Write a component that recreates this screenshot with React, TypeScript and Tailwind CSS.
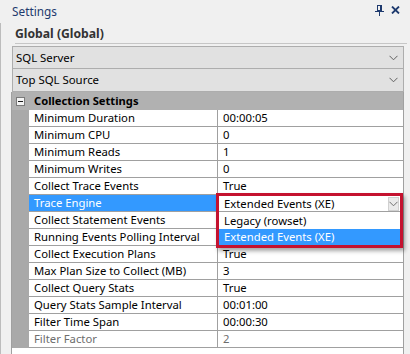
import React from "react";

const rows: { name: string; value: string; disabled?: boolean; selected?: boolean }[] = [
  { name: "Minimum Duration", value: "00:00:05" },
  { name: "Minimum CPU", value: "0" },
  { name: "Minimum Reads", value: "1" },
  { name: "Minimum Writes", value: "0" },
  { name: "Collect Trace Events", value: "True" },
  { name: "Trace Engine", value: "", selected: true },
  { name: "Collect Statement Events", value: "" },
  { name: "Running Events Polling Interval", value: "" },
  { name: "Collect Execution Plans", value: "True" },
  { name: "Max Plan Size to Collect (MB)", value: "3" },
  { name: "Collect Query Stats", value: "True" },
  { name: "Query Stats Sample Interval", value: "00:01:00" },
  { name: "Filter Time Span", value: "00:00:30" },
  { name: "Filter Factor", value: "2", disabled: true },
];

function Chevron({ color = "#606060" }: { color?: string }) {
  return (
    <svg width="9" height="6" viewBox="0 0 9 6">
      <polyline points="0.5,0.8 4.5,4.8 8.5,0.8" fill="none" stroke={color} strokeWidth="1" />
    </svg>
  );
}

function PinIcon() {
  return (
    <svg width="9" height="11" viewBox="0 0 9 11">
      <rect x="2.5" y="0.5" width="4" height="5" fill="none" stroke="#1e3a6e" strokeWidth="1" />
      <rect x="5" y="0" width="2" height="6" fill="#1e3a6e" />
      <rect x="0" y="6" width="9" height="1" fill="#1e3a6e" />
      <rect x="4" y="7" width="1" height="4" fill="#1e3a6e" />
    </svg>
  );
}

function CloseIcon() {
  return (
    <svg width="9" height="8" viewBox="0 0 9 8">
      <path d="M1,0.5 L8,7.5 M8,0.5 L1,7.5" stroke="#1e3a6e" strokeWidth="1.8" fill="none" />
    </svg>
  );
}

export default function App() {
  return (
    <div className="relative w-[410px] h-[354px] overflow-hidden bg-[#f0f0f0] font-['Noto_Sans',sans-serif] text-[11.3px] text-black">
      {/* Title bar */}
      <div className="flex items-center h-[23px] pl-[12px] pr-[10px]">
        <span className="text-[#1e3a6e] text-[11.8px] leading-[16px] -mt-[1px]">Settings</span>
        <div className="ml-auto flex items-center gap-[7px] -mt-[3px]">
          <PinIcon />
          <CloseIcon />
        </div>
      </div>
      {/* Body */}
      <div className="border-l border-[#bcbcbc] h-[331px] flex flex-col">
        <div className="ml-[14px] mr-[3px] h-[21px] border-b border-[#c6c6c6] flex items-end">
          <span className="font-bold text-[12.2px] text-[#333333] leading-[17px] pb-[1px]">Global (Global)</span>
        </div>
        <div className="mt-[2px] ml-[11px] w-[392px] flex flex-col">
          <div className="h-[23px] border border-[#adadad] bg-[#e1e1e1] flex items-center pl-[3px] pr-[5px]">
            <span className="text-[11.4px]">SQL Server</span>
            <span className="ml-auto"><Chevron /></span>
          </div>
          <div className="h-[23px] border border-[#adadad] border-t-0 bg-[#e1e1e1] flex items-center pl-[3px] pr-[5px]">
            <span className="text-[11.4px]">Top SQL Source</span>
            <span className="ml-auto"><Chevron /></span>
          </div>
          {/* Grid */}
          <div className="border-x border-[#a0a0a0] bg-white flex flex-col -ml-px w-[393px] h-[262px]">
            <div className="flex h-[18px] bg-[#b1b1b1]">
              <div className="w-[17px] flex items-center justify-center">
                <div className="w-[9px] h-[9px] border border-[#7a7a7a] bg-[#f4f4f4] flex items-center justify-center">
                  <div className="w-[5px] h-px bg-[#1a1a1a]" />
                </div>
              </div>
              <div className="pl-[5px] font-bold leading-[18px] text-[11.2px]">Collection Settings</div>
            </div>
            {rows.map((r) => (
              <div key={r.name} className="flex h-[17px]">
                <div className="w-[17px] bg-[#a9a9a9]" />
                <div
                  className={
                    "w-[189px] border-r border-b border-[#a0a0a0] pl-[5px] leading-[16px] whitespace-nowrap " +
                    (r.selected ? "bg-[#3399ff] text-white" : r.disabled ? "text-[#6d6d6d]" : "")
                  }
                >
                  {r.name}
                </div>
                <div
                  className={
                    "flex-1 border-b border-[#a0a0a0] pl-[5px] leading-[16px] whitespace-nowrap " +
                    (r.disabled ? "text-[#6d6d6d]" : "")
                  }
                >
                  {r.value}
                </div>
              </div>
            ))}
          </div>
        </div>
      </div>
      {/* Dropdown overlay */}
      <div className="absolute left-[216px] top-[193px] w-[187px] border-[3px] border-[#c4122f] bg-white shadow-[2px_3px_4px_rgba(0,0,0,0.35)] flex flex-col">
        <div className="h-[16px] flex items-center pl-[5px] pr-[1px] border-b border-[#a0a0a0]">
          <span className="leading-[15px]">Extended Events (XE)</span>
          <div className="ml-auto w-[11px] h-[14px] bg-[#eaeaea] border border-[#d0d0d0] flex items-center justify-center">
            <Chevron color="#707070" />
          </div>
        </div>
        <div className="h-[17px] pl-[5px] leading-[17px]">Legacy (rowset)</div>
        <div className="h-[16px] pl-[5px] leading-[16px] bg-[#3399ff] text-white">Extended Events (XE)</div>
      </div>
    </div>
  );
}
